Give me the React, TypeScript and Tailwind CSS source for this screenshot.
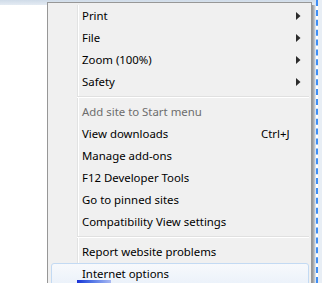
import React from "react";

type Item =
  | { kind: "item"; label: string; arrow?: boolean; shortcut?: string; disabled?: boolean; hover?: boolean }
  | { kind: "sep" };

const items: Item[] = [
  { kind: "item", label: "Print", arrow: true },
  { kind: "item", label: "File", arrow: true },
  { kind: "item", label: "Zoom (100%)", arrow: true },
  { kind: "item", label: "Safety", arrow: true },
  { kind: "sep" },
  { kind: "item", label: "Add site to Start menu", disabled: true },
  { kind: "item", label: "View downloads", shortcut: "Ctrl+J" },
  { kind: "item", label: "Manage add-ons" },
  { kind: "item", label: "F12 Developer Tools" },
  { kind: "item", label: "Go to pinned sites" },
  { kind: "item", label: "Compatibility View settings" },
  { kind: "sep" },
  { kind: "item", label: "Report website problems" },
  { kind: "item", label: "Internet options", hover: true },
];

function Arrow() {
  return (
    <svg width="5" height="8" viewBox="0 0 5 8" className="block">
      <polygon points="0,0 4.5,4 0,8" fill="#2b2b2b" />
    </svg>
  );
}

function Gutter() {
  return (
    <div className="flex h-full shrink-0">
      <div className="w-[27px]" />
      <div className="w-px bg-[#e2e3e3]" />
      <div className="w-px bg-white" />
    </div>
  );
}

export default function App() {
  return (
    <div
      className="relative w-[322px] h-[283px] overflow-hidden bg-white"
      style={{ fontFamily: '"Noto Sans", "Open Sans", sans-serif' }}
    >
      {/* window frame strip at top */}
      <div className="absolute left-0 top-0 w-[316px] h-[5px] bg-gradient-to-b from-[#cfdbe8] to-[#e4ebf3]" />
      {/* right frame strip with dashed focus line */}
      <div className="absolute top-0 right-0 w-[7px] h-[283px] flex">
        <div className="w-px bg-[#d9e3ee]" />
        <div className="w-[2px] h-full border-l-2 border-dashed border-[#3f8ef5]" />
        <div className="flex-1 bg-[#e8eef5]" />
      </div>

      {/* context menu */}
      <div className="absolute left-[47px] top-[2px] w-[268px] flex">
        <div className="w-[265px] border border-[#979797] bg-[#f0f0f0] p-[2px] text-[11.4px] leading-none text-black">
          {items.map((it, i) =>
            it.kind === "sep" ? (
              <div key={i} className="flex h-[8px]">
                <Gutter />
                <div className="flex-1 flex flex-col pt-[3px]">
                  <div className="h-px bg-[#e0e0e0] -ml-[2px]" />
                  <div className="h-px bg-white -ml-[2px]" />
                </div>
              </div>
            ) : (
              <div key={i} className="relative flex h-[22px] items-center">
                {it.hover && (
                  <div className="absolute left-[1px] right-0 top-0 h-[24px] rounded-[3px] border border-[#c3daf3] bg-gradient-to-b from-[#f7f9fc] to-[#eaf1fa]" />
                )}
                <Gutter />
                <div
                  className={
                    "relative flex-1 pl-[3px] pr-[8px] flex items-center " +
                    (it.disabled ? "text-[#6d6d6d]" : "text-black")
                  }
                >
                  <span className="flex-1 whitespace-nowrap">{it.label}</span>
                  {it.shortcut && <span className="w-[40px] whitespace-nowrap">{it.shortcut}</span>}
                  {it.arrow && <Arrow />}
                </div>
              </div>
            )
          )}
        </div>
        {/* drop shadow on the right */}
        <div className="w-[3px] h-[290px] mt-[3px] bg-gradient-to-r from-[#8f8f8f] to-[#c9ced4]" />
      </div>

      {/* blue fragment at the bottom */}
      <div className="absolute left-[77px] top-[280px] w-[34px] h-[3px] bg-gradient-to-r from-[#1b2fd6] to-[#a9b8f2]" />
    </div>
  );
}
